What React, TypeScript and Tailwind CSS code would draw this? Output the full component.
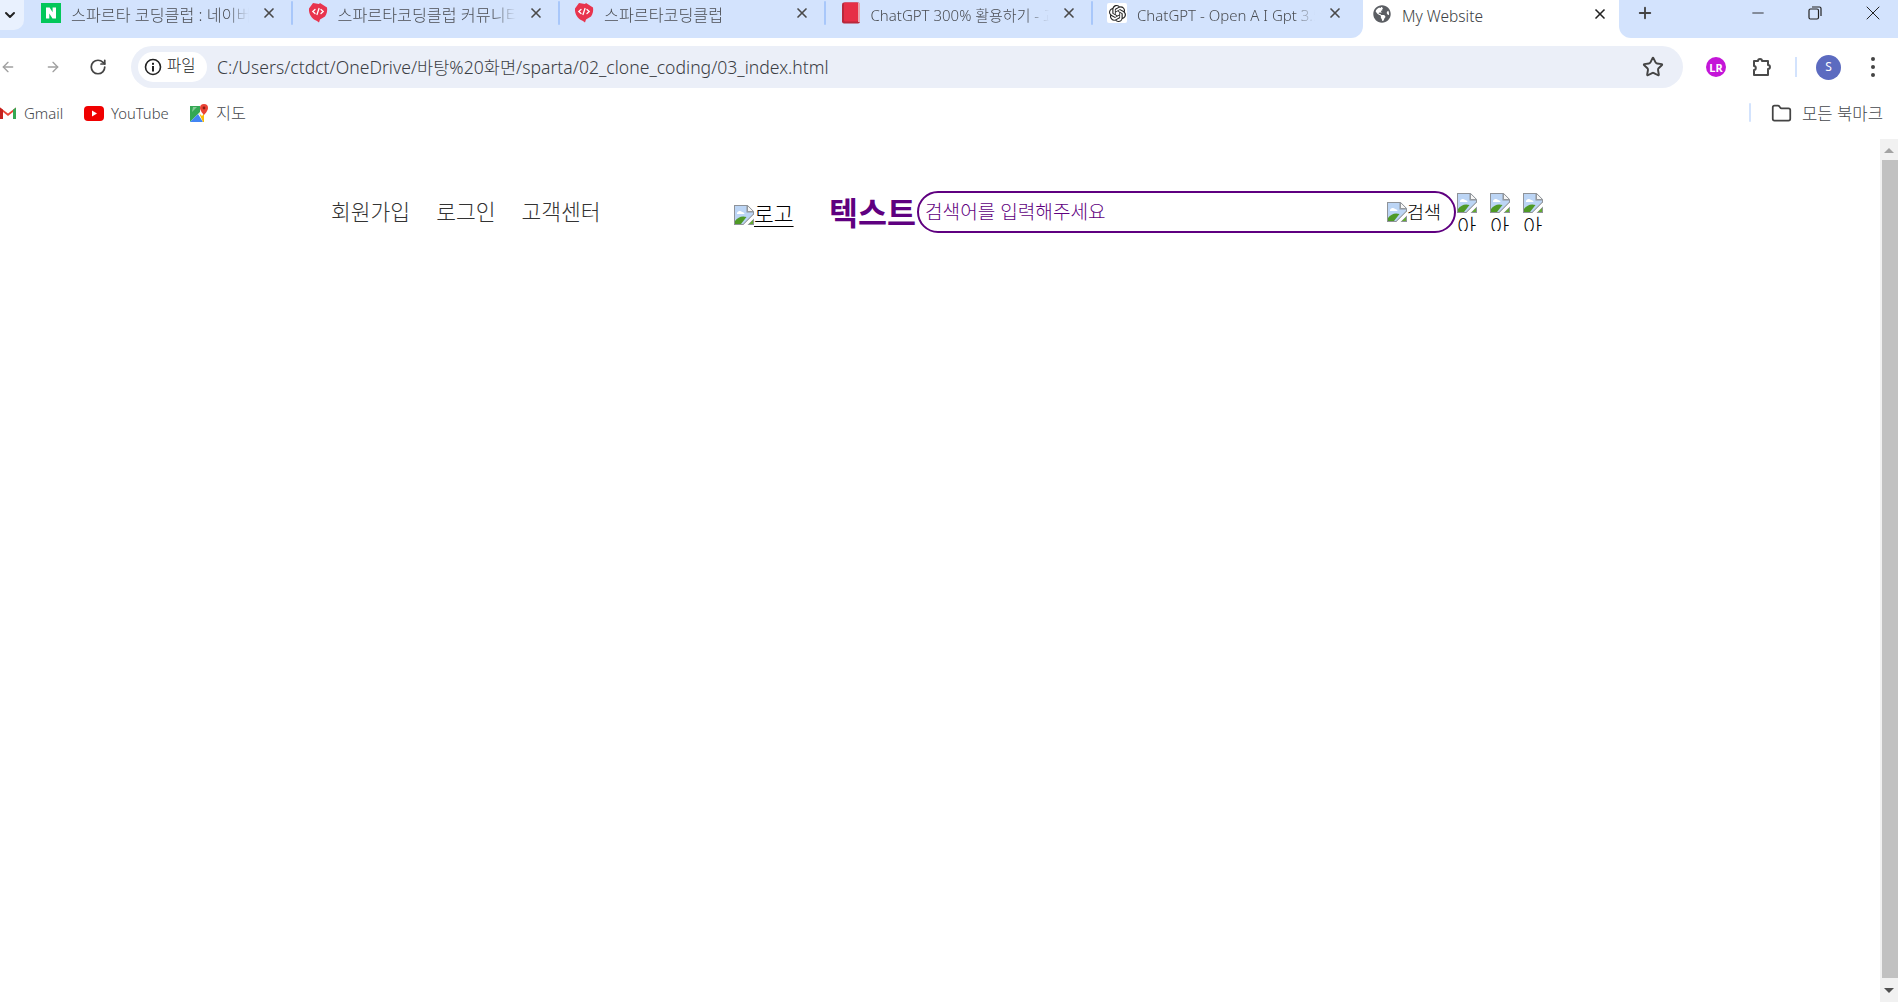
import React from "react";
import { ArrowLeft, ArrowRight, RotateCw, Star, X, Plus, ChevronDown, Folder, Minus } from "lucide-react";
import { SiOpenai } from "react-icons/si";
import { FaGlobeAmericas } from "react-icons/fa";

const BrokenImg = () => (
  <svg width="20" height="20" viewBox="0 0 20 20" className="shrink-0">
    <path d="M0 0h13.500L20 6.500V9.500L9.500 20H0z" fill="#8f9399" />
    <path d="M1 1h11.500v6.500H19V9L9 19H1z" fill="#bcd5f5" />
    <path d="M13.500 0.500V6.500H19.500z" fill="#f6f6f6" stroke="#8f9399" strokeWidth=".9" />
    <path d="M3 8c1-2.500 4-2.500 5-1 1.500 0 2.500 1 2.500 2H3z" fill="#fff" />
    <path d="M1 19v-3c3-4 7-5.500 11.500-4L7 19z" fill="#4f9a26" />
    <path d="M9.500 20 20 9.500V12.500L12.500 20z" fill="#fff" />
    <path d="M13.500 20l6.500-6.500V20z" fill="#8f9399" />
    <path d="M15 19l4-4v4z" fill="#62aa30" />
  </svg>
);

const Naver = () => (
  <svg width="20" height="20" viewBox="0 0 20 20">
    <rect width="20" height="20" fill="#03c75a" />
    <path d="M5 4.500h3.600l3 4.800V4.500H15v11h-3.500L8.300 10.600v4.900H5z" fill="#fff" />
  </svg>
);

const Sparta = () => (
  <svg width="20" height="22" viewBox="0 0 20 22">
    <path d="M5 1l6 1 1-1 7 4.500c.6 3-.2 6.500-2 9l-5 3-1 3-2-1.500-3-1.500C3 15 .6 11.500 1 6.500z" fill="#e8344e" />
    <path d="M7 7.500 4.800 9.500 7 11.500M13 7.500l2.200 2L13 11.500M11 6.500l-2 6" fill="none" stroke="#fff" strokeWidth="1.300" strokeLinecap="round" />
  </svg>
);

const Book = () => (
  <svg width="20" height="22" viewBox="0 0 20 22">
    <rect x="1" y="0.500" width="18" height="21" rx="2" fill="#b8283c" />
    <rect x="3" y="0.500" width="14" height="19" rx="1" fill="#e62f47" />
    <rect x="17" y="1" width="2" height="19" fill="#e7a4ae" />
  </svg>
);

const Gpt = () => (
  <span className="flex h-5 w-5 items-center justify-center rounded-[2px] bg-white">
    <SiOpenai size={17} color="#222" />
  </span>
);

const Globe = () => <FaGlobeAmericas size={18} color="#5b5e63" />;

const tabs = [
  { icon: <Naver />, title: "스파르타 코딩클럽 : 네이버 블로그", cls: "text-[16.200px]" },
  { icon: <Sparta />, title: "스파르타코딩클럽 커뮤니티 게시판", cls: "text-[16.200px]" },
  { icon: <Sparta />, title: "스파르타코딩클럽", cls: "text-[16.200px]" },
  { icon: <Book />, title: "ChatGPT 300% 활용하기 - 교보문고", cls: "text-[15px]" },
  { icon: <Gpt />, title: "ChatGPT - Open A I Gpt 3.5 Chat", cls: "text-[15px]" },
];

function App() {
  return (
    <div className="flex h-screen w-full flex-col overflow-hidden bg-white font-['Noto_Sans','Noto_Sans_CJK_KR',sans-serif] font-light text-[#3c3c3c]">
      {/* Tab strip */}
      <div className="flex h-[38px] shrink-0 items-start bg-[#d3e3fd]">
        <div className="flex h-[30px] w-[24px] shrink-0 items-center justify-center rounded-br-[10px] bg-[#e9f1fe] pr-1">
          <ChevronDown size={16} strokeWidth={3} color="#222" />
        </div>
        <div className="w-[3px] shrink-0" />
        {tabs.map((t, i) => (
          <div key={i} className="flex h-[26px] w-[266.500px] shrink-0 items-center">
            <div className="flex w-[30px] shrink-0 justify-start pl-[14px]">
              <div className="shrink-0">{t.icon}</div>
            </div>
            <div className={"ml-[14px] w-[178px] overflow-hidden whitespace-nowrap pt-[4px] leading-[22px] text-[#4a4d52] [mask-image:linear-gradient(to_right,black_88%,transparent)] " + t.cls}>
              {t.title}
            </div>
            <div className="ml-[10px] flex w-[20px] shrink-0 justify-center">
              <X size={16} strokeWidth={2.500} color="#4a4a4a" />
            </div>
            {i < 4 && <div className="ml-[12px] h-[24px] w-[2px] shrink-0 rounded bg-[#a8c7fa]" />}
          </div>
        ))}
        <div className="relative ml-[3.500px] flex h-[38px] w-[256px] shrink-0 items-start bg-white pl-[10px] pt-[5px]">
          <div className="absolute bottom-0 left-[-12px] h-[12px] w-[12px] bg-white">
            <div className="h-full w-full rounded-br-[12px] bg-[#d3e3fd]" />
          </div>
          <div className="absolute bottom-0 right-[-12px] h-[12px] w-[12px] bg-white">
            <div className="h-full w-full rounded-bl-[12px] bg-[#d3e3fd]" />
          </div>
          <div className="shrink-0"><Globe /></div>
          <div className="ml-[11px] w-[188px] text-[15.500px] leading-[22px] text-[#3c3f44]">My Website</div>
          <div className="flex w-[20px] shrink-0 justify-center pt-[1px]">
            <X size={16} strokeWidth={2.500} color="#222" />
          </div>
        </div>
        <div className="ml-[16px] flex h-[26px] w-[20px] shrink-0 items-center justify-center">
          <Plus size={18} strokeWidth={2.500} color="#444" />
        </div>
        <div className="flex-1" />
        <div className="flex h-[26px] shrink-0 items-center">
          <div className="flex w-[56px] justify-center"><Minus size={18} strokeWidth={1.200} color="#222" /></div>
          <div className="mr-[4px] flex w-[58px] justify-center">
            <svg width="14" height="14" viewBox="0 0 14 14" fill="none" stroke="#222" strokeWidth="1.200">
              <rect x="1" y="3" width="9.500" height="10" rx="1.500" />
              <path d="M4 1h7.500A1.500 1.500 0 0 1 13 2.500V10" />
            </svg>
          </div>
          <div className="flex w-[50px] justify-center"><X size={24} strokeWidth={1} color="#222" /></div>
        </div>
      </div>

      {/* Toolbar */}
      <div className="flex h-[50px] shrink-0 items-center pt-[8px]">
        <div className="flex w-[131px] shrink-0 items-center">
          <div className="flex w-[16px] justify-center"><ArrowLeft size={24} color="#a0a0a0" strokeWidth={2} /></div>
          <div className="ml-[29px] flex w-[16px] justify-center"><ArrowRight size={24} color="#a0a0a0" strokeWidth={2} /></div>
          <div className="ml-[27px] flex w-[20px] justify-center"><RotateCw size={18} color="#444" strokeWidth={2.300} /></div>
        </div>
        <div className="flex h-[42px] w-[1552px] shrink-0 items-center rounded-full bg-[#ebeff8] pl-[7px] pr-[19px]">
          <div className="flex h-[30px] w-[69px] shrink-0 items-center rounded-full bg-white pl-[6px]">
            <svg width="18" height="18" viewBox="0 0 18 18" className="shrink-0">
              <circle cx="9" cy="9" r="7.500" fill="none" stroke="#222" strokeWidth="1.600" />
              <rect x="8" y="8" width="2" height="5.500" fill="#222" />
              <rect x="8" y="4.800" width="2" height="2" fill="#222" />
            </svg>
            <span className="ml-[5px] pb-[2px] text-[15.500px] leading-none text-[#222]">파일</span>
          </div>
          <div className="ml-[10px] flex-1 whitespace-nowrap text-[17.600px] text-[#3b3e44]">C:/Users/ctdct/OneDrive/바탕%20화면/sparta/02_clone_coding/03_index.html</div>
          <Star size={22} color="#444" strokeWidth={2.100} />
        </div>
        <div className="ml-[23px] flex h-[20px] w-[20px] shrink-0 items-center justify-center rounded-full bg-[#c416d8] text-[11px] font-bold leading-none text-white">LR</div>
        <div className="ml-[26px] shrink-0">
          <svg width="20" height="22" viewBox="0 0 20 22" fill="none" stroke="#4a4a4a" strokeWidth="2" strokeLinejoin="round">
            <path d="M2 5h4c0-2.600 4-2.600 4 0h6v4c2.600 0 2.600 4 0 4v6H2v-5c2.400 0 2.400-4 0-4z" />
          </svg>
        </div>
        <div className="ml-[23px] h-[20px] w-[2px] shrink-0 bg-[#d3e3fd]" />
        <div className="ml-[19px] flex h-[25px] w-[25px] shrink-0 items-center justify-center rounded-full bg-[#5c6bc0] text-[12px] font-normal text-white">S</div>
        <div className="ml-[30px] flex shrink-0 flex-col gap-[4px]">
          <div className="h-[4px] w-[4px] rounded-full bg-[#444]" />
          <div className="h-[4px] w-[4px] rounded-full bg-[#444]" />
          <div className="h-[4px] w-[4px] rounded-full bg-[#444]" />
        </div>
      </div>

      {/* Bookmarks */}
      <div className="flex h-[51px] shrink-0 items-start pt-[15px] text-[15px] leading-[20px] text-[#44474c]">
        <div className="flex items-center">
          <svg width="16" height="14" viewBox="1 2 16 14" className="shrink-0">
            <path d="M1 15V3.500L9 9.500 17 3.500V15h-3V8L9 12 4 8v7z" fill="#ea4335" />
            <path d="M1 15V3.500l3 2.300V15z" fill="#c5221f" />
            <path d="M14 15V5.800l3-2.300V15z" fill="#34a853" />
          </svg>
          <span className="ml-[8px] w-[38px]">Gmail</span>
        </div>
        <div className="ml-[22px] flex items-center">
          <svg width="20" height="15" viewBox="0 0 20 15" className="shrink-0">
            <rect width="20" height="15" rx="4" fill="#f00000" />
            <path d="M8 4.500v6l5-3z" fill="#fff" />
          </svg>
          <span className="ml-[7px] w-[57px] text-[14.800px]">YouTube</span>
        </div>
        <div className="ml-[22px] flex items-center">
          <svg width="18" height="18" viewBox="0 0 18 18" className="shrink-0">
            <path d="M0 2h10v6L0 18z" fill="#34a853" />
            <path d="M0 18 8 10l5 8z" fill="#4285f4" />
            <path d="M9 9l3 3 2-2.500V18h-1z" fill="#fbbc04" />
            <path d="M3 3h4L2 8z" fill="#fff" opacity=".4" />
            <path d="M14 0a4 4 0 0 1 4 4c0 3-4 7-4 7s-4-4-4-7a4 4 0 0 1 4-4z" fill="#ea4335" />
            <circle cx="14" cy="4" r="1.400" fill="#8a1c14" />
          </svg>
          <span className="ml-[8px] text-[16.300px]">지도</span>
        </div>
        <div className="flex-1" />
        <div className="h-[19px] w-[2px] shrink-0 self-start rounded-sm bg-[#d3e3fd]" />
        <div className="ml-[20px] flex items-center">
          <Folder size={21} color="#444" strokeWidth={2} />
          <span className="ml-[10px] whitespace-nowrap text-[16.700px]">모든 북마크</span>
        </div>
        <div className="w-[15px] shrink-0" />
      </div>

      {/* Page */}
      <div className="flex min-h-0 flex-1">
        <div className="flex-1 pt-[52px] pl-[331px]">
          <header className="flex h-[42px] items-center">
            <nav className="flex w-[403px] shrink-0 gap-[26px] pb-[1px] text-[21.500px] leading-[30px] text-[#333]">
              <a>회원가입</a>
              <a>로그인</a>
              <a>고객센터</a>
            </nav>
            <a className="flex w-[95px] shrink-0 items-end pt-[2px] font-['Noto_Sans_CJK_KR',sans-serif] text-[21.500px] leading-[24px] text-black underline underline-offset-[4px] decoration-1">
              <BrokenImg />
              <span>로고</span>
            </a>
            <div className="w-[88px] shrink-0 whitespace-nowrap pt-[2px] text-[31.500px] font-bold leading-[40px] text-[#5f0080]">텍스트</div>
            <div className="flex h-[42px] w-[539px] shrink-0 items-center justify-between rounded-full border-[2.500px] border-[#5f0080] pl-[6px] pr-[13px]">
              <span className="text-[19.100px] leading-[26px] text-[#5f0080]">검색어를 입력해주세요</span>
              <span className="flex items-center text-[18.500px] leading-[22px] text-black">
                <BrokenImg />
                <span>검색</span>
              </span>
            </div>
            <div className="flex shrink-0 gap-[13px] self-start pt-[2px] pl-[1px]">
              {[0, 1, 2].map((i) => (
                <div key={i} className="h-[38px] w-[20px] overflow-hidden text-[21px] leading-[24px] text-black">
                  <BrokenImg />
                  <div className="break-all pt-[1px]">아이콘</div>
                </div>
              ))}
            </div>
          </header>
        </div>
        {/* Scrollbar */}
        <div className="flex w-[18px] shrink-0 flex-col bg-[#f1f1f1]">
          <div className="flex h-[21px] shrink-0 items-center justify-center pt-[1px]">
            <div className="h-0 w-0 border-x-[5px] border-b-[5px] border-x-transparent border-b-[#a3a3a3]" />
          </div>
          <div className="ml-[2px] flex-1 bg-[#c1c1c1]" />
          <div className="flex h-[24px] shrink-0 items-center justify-center">
            <div className="h-0 w-0 border-x-[5px] border-t-[5px] border-x-transparent border-t-[#505050]" />
          </div>
        </div>
      </div>
    </div>
  );
}

export default App;
